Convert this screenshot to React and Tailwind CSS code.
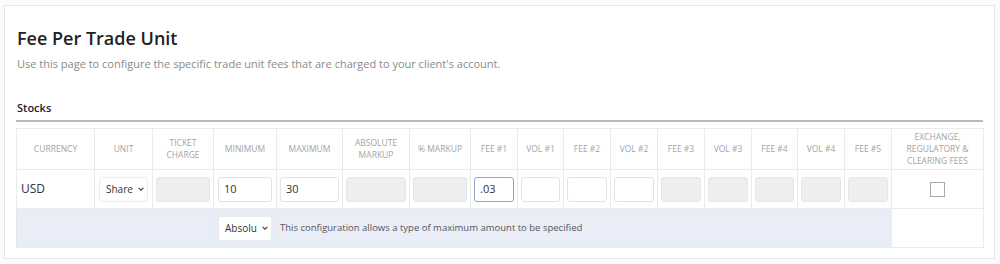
const cols = [78, 58, 61, 63, 66, 67, 61, 47, 46, 47, 47, 47, 47, 46, 47, 47, 92];

const headers = [
  ['CURRENCY'],
  ['UNIT'],
  ['TICKET', 'CHARGE'],
  ['MINIMUM'],
  ['MAXIMUM'],
  ['ABSOLUTE', 'MARKUP'],
  ['% MARKUP'],
  ['FEE #1'],
  ['VOL #1'],
  ['FEE #2'],
  ['VOL #2'],
  ['FEE #3'],
  ['VOL #3'],
  ['FEE #4'],
  ['VOL #4'],
  ['FEE #5'],
  ['EXCHANGE,', 'REGULATORY &', 'CLEARING FEES'],
];

function Chevron() {
  return (
    <svg width="8" height="8" viewBox="0 0 10 10" className="shrink-0">
      <path d="M2 3.5 L5 6.5 L8 3.5" fill="none" stroke="#444" strokeWidth="1.5" />
    </svg>
  );
}

function GrayBox() {
  return <div className="h-[25px] rounded-[3px] border border-[#e4e6e9] bg-[#eceef0]" />;
}

function TextBox({ value, focused }) {
  return (
    <div
      className={
        focused
          ? 'h-[25px] rounded-[3px] border border-[#8ea4c8] bg-white px-[5px] flex items-center text-[11px] text-[#333]'
          : 'h-[25px] rounded-[3px] border border-[#e3e3e3] bg-white px-[5px] flex items-center text-[11px] text-[#333]'
      }
    >
      {value}
    </div>
  );
}

function SelectBox({ label }) {
  return (
    <div className="h-[25px] rounded-[3px] border border-[#ececec] bg-white pl-[6px] pr-[5px] flex items-center justify-between gap-[4px] text-[10px] text-[#333] overflow-hidden">
      <span className="whitespace-nowrap">{label}</span>
      <Chevron />
    </div>
  );
}

export default function App() {
  return (
    <div className="min-h-screen bg-[#fbfbfb] pt-[5px] pl-[4px] pr-[5px]" style={{ fontFamily: '"Open Sans", "Liberation Sans", sans-serif' }}>
      <div className="bg-white border border-[#e6e6e6] pl-[11px] pr-[11px] pt-[21px] pb-[10px]">
        <h1 className="text-[18px] leading-[22px] font-semibold text-[#222] pl-[1px]">Fee Per Trade Unit</h1>
        <p className="mt-[7px] text-[11px] leading-[16px] text-[#8a8a8a] pl-[1px]">
          Use this page to configure the specific trade unit fees that are charged to your client's account.
        </p>

        <div className="mt-[29px] pb-[5px] border-b-2 border-[#b8b8b8] text-[11px] leading-[14px] font-semibold text-[#222] pl-[1px]">
          Stocks
        </div>

        <table className="mt-[6px] table-fixed border-collapse w-[967px] border border-[#e6e6e6]">
          <colgroup>
            {cols.map((w, i) => (
              <col key={i} style={{ width: w }} />
            ))}
          </colgroup>
          <thead>
            <tr className="h-[41px]">
              {headers.map((h, i) => (
                <th key={i} className="border border-[#ebebeb] px-1 text-center align-middle font-normal text-[8.5px] leading-[12px] text-[#a3a3a3]">
                  {h.map((line, j) => (
                    <div key={j}>{line}</div>
                  ))}
                </th>
              ))}
            </tr>
          </thead>
          <tbody>
            <tr className="h-[39px]">
              <td className="border border-[#ebebeb] pl-[4px] text-[12px] text-[#333]">USD</td>
              <td className="border border-[#ebebeb] px-[4px]">
                <SelectBox label="Share" />
              </td>
              <td className="border border-[#ebebeb] px-[3px]">
                <GrayBox />
              </td>
              <td className="border border-[#ebebeb] px-[4px]">
                <TextBox value="10" />
              </td>
              <td className="border border-[#ebebeb] px-[3px]">
                <TextBox value="30" />
              </td>
              <td className="border border-[#ebebeb] px-[3px]">
                <GrayBox />
              </td>
              <td className="border border-[#ebebeb] px-[3px]">
                <GrayBox />
              </td>
              <td className="border border-[#ebebeb] px-[3px]">
                <TextBox value=".03" focused />
              </td>
              <td className="border border-[#ebebeb] px-[3px]">
                <TextBox value="" />
              </td>
              <td className="border border-[#ebebeb] px-[3px]">
                <TextBox value="" />
              </td>
              <td className="border border-[#ebebeb] px-[3px]">
                <TextBox value="" />
              </td>
              {[0, 1, 2, 3, 4].map((i) => (
                <td key={i} className="border border-[#ebebeb] px-[3px]">
                  <GrayBox />
                </td>
              ))}
              <td className="border border-[#ebebeb] text-center">
                <div className="mx-auto w-[15px] h-[15px] border border-[#a9a9a9] bg-white" />
              </td>
            </tr>
            <tr className="h-[39px]">
              <td colSpan={3} className="border-y border-[#ebebeb] bg-[#e9edf8]" />
              <td className="border border-[#ebebeb] bg-[#e9edf8] px-[4px]">
                <SelectBox label="Absolu" />
              </td>
              <td colSpan={12} className="border border-[#ebebeb] bg-[#e9edf8] pl-[3px] text-[9.5px] text-[#555] whitespace-nowrap">
                This configuration allows a type of maximum amount to be specified
              </td>
              <td className="border border-[#ebebeb] bg-white" />
            </tr>
          </tbody>
        </table>
      </div>
    </div>
  );
}
